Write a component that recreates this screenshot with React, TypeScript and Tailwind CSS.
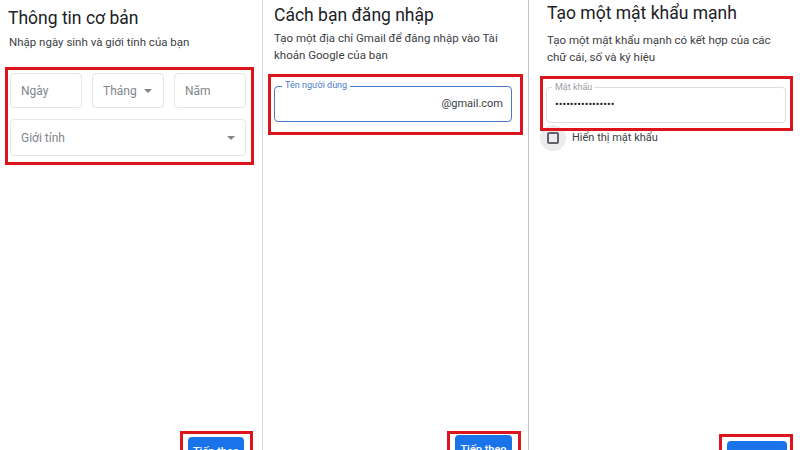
import React from "react";

const Arrow = () => (
  <svg width="8" height="4" viewBox="0 0 8 4" className="shrink-0">
    <path d="M0 0L4 4L8 0z" fill="#80868b" />
  </svg>
);

const Button = () => (
  <div className="h-[30px] rounded-[4px] bg-[#1a73e8] flex items-center justify-center text-white text-[11px] font-medium">
    Tiếp theo
  </div>
);

export default function App() {
  return (
    <div className="w-[800px] h-[450px] bg-white flex overflow-hidden font-['Roboto',sans-serif]">
      {/* Panel 1 */}
      <div className="w-[263px] h-[450px] shrink-0 border-r border-[#dcdcdc] flex flex-col">
        <h1 className="ml-[8px] mt-[6px] text-[17.5px] leading-[24px] text-[#202124]">Thông tin cơ bản</h1>
        <p className="ml-[9px] mt-[4px] text-[11.5px] leading-[16px] text-[#3c4043]">Nhập ngày sinh và giới tính của bạn</p>
        <div className="ml-[5px] mt-[17px] w-[249px] border-[3px] border-[#dc141c] pl-[2px] pr-[5px] pt-[3px] pb-[6px] flex flex-col gap-[11px]">
          <div className="grid grid-cols-3 gap-[10px]">
            <div className="h-[35px] border border-[#e6e6e6] rounded-[4px] flex items-center pl-[10px] text-[12px] text-[#80868b]">Ngày</div>
            <div className="h-[35px] border border-[#e6e6e6] rounded-[4px] flex items-center pl-[10px] pr-[11px] justify-between text-[12px] text-[#80868b]">
              <span>Tháng</span>
              <Arrow />
            </div>
            <div className="h-[35px] border border-[#e6e6e6] rounded-[4px] flex items-center pl-[10px] text-[12px] text-[#80868b]">Năm</div>
          </div>
          <div className="h-[37px] border border-[#e6e6e6] rounded-[4px] flex items-center justify-between pl-[10px] pr-[10px] text-[12px] text-[#80868b]">
            <span>Giới tính</span>
            <Arrow />
          </div>
        </div>
        <div className="mt-auto mb-[-31px] flex justify-end pr-[9px]">
          <div className="w-[73px] h-[50px] border-[3px] border-[#dc141c] pl-[5px] pr-[6px] pt-[3px]">
            <Button />
          </div>
        </div>
      </div>

      {/* Panel 2 */}
      <div className="w-[266px] h-[450px] shrink-0 border-r border-[#c4c4c4] flex flex-col">
        <h1 className="ml-[11px] mt-[3px] text-[17.5px] leading-[24px] text-[#202124]">Cách bạn đăng nhập</h1>
        <p className="ml-[11px] mt-[3px] text-[11.5px] leading-[17px] text-[#3c4043]">
          Tạo một địa chỉ Gmail để đăng nhập vào Tài
          <br />
          khoản Google của bạn
        </p>
        <div className="ml-[5px] mt-[10px] w-[255px] border-[3px] border-[#dc141c] pl-[3px] pr-[8px] pt-[9px] pb-[10px]">
          <div className="relative h-[36px] border-[1.5px] border-[#4a7bc8] rounded-[4px] flex items-center justify-end pr-[8px]">
            <span className="absolute left-[7px] top-[-7px] bg-white px-[3px] text-[9px] leading-[11px] text-[#4a7bc8]">Tên người dùng</span>
            <span className="text-[11px] text-[#3c4043]">@gmail.com</span>
          </div>
        </div>
        <div className="mt-auto mb-[-31px] flex justify-end pr-[7px]">
          <div className="w-[74px] h-[50px] border-[3px] border-[#dc141c] pl-[5px] pr-[6px] pt-[1px]">
            <Button />
          </div>
        </div>
      </div>

      {/* Panel 3 */}
      <div className="w-[271px] h-[450px] shrink-0 flex flex-col">
        <h1 className="ml-[18px] mt-[1px] text-[17.5px] leading-[24px] text-[#202124]">Tạo một mật khẩu mạnh</h1>
        <p className="ml-[18px] mt-[7px] text-[11.5px] leading-[17px] text-[#3c4043]">
          Tạo một mật khẩu mạnh có kết hợp của các
          <br />
          chữ cái, số và ký hiệu
        </p>
        <div className="relative z-10 ml-[11px] mt-[10px] w-[253px] border-[3px] border-[#dc141c] pl-[3px] pr-[4px] pt-[8px] pb-[5px]">
          <div className="relative h-[36px] border border-[#dadce0] rounded-[4px] flex items-center pl-[8px]">
            <span className="absolute left-[5px] top-[-6px] bg-white px-[3px] text-[9px] leading-[11px] text-[#9aa0a6]">Mật khẩu</span>
            <span className="text-[11px] leading-[12px] text-[#202124]">••••••••••••••••</span>
          </div>
        </div>
        <div className="ml-[11px] mt-[-6px] flex items-center gap-[6px]">
          <div className="w-[26px] h-[26px] rounded-full bg-[#ececec] flex items-center justify-center">
            <div className="w-[12px] h-[12px] border-2 border-[#5f6368] rounded-[2px] bg-transparent" />
          </div>
          <span className="text-[11px] text-[#3c4043]">Hiển thị mật khẩu</span>
        </div>
        <div className="mt-auto mb-[-34px] flex justify-end pr-[7px]">
          <div className="w-[74px] h-[50px] border-[3px] border-[#dc141c] pl-[5px] pr-[3px] pt-[4px]">
            <Button />
          </div>
        </div>
      </div>
    </div>
  );
}
